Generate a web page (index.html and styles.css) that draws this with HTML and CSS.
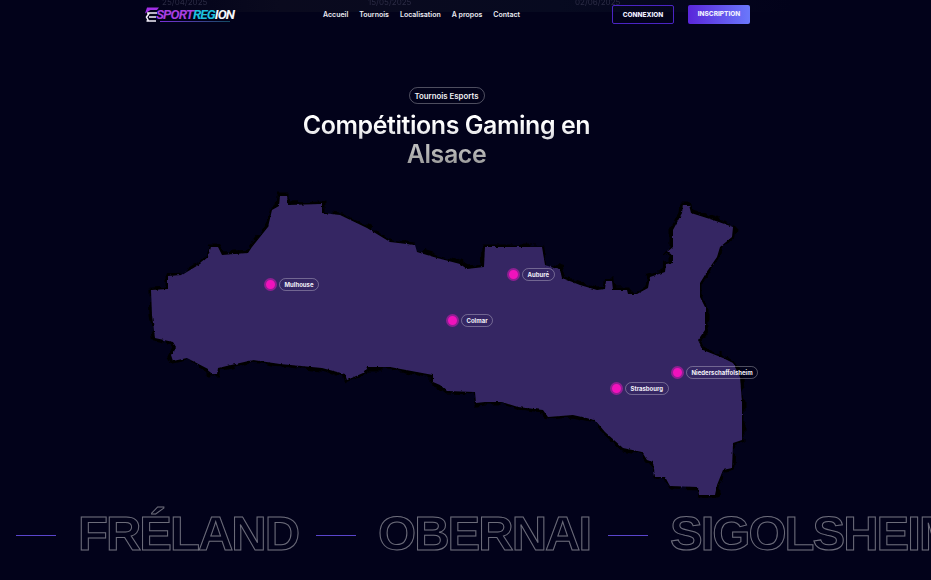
FILE: index.html
```html
<!DOCTYPE html>
<html lang="fr">
<head>
<meta charset="utf-8">
<title>EsportRegion</title>
<link rel="stylesheet" href="styles.css">
</head>
<body>
<div class="page">
  <div class="date-strip">
    <span class="date date-a">25/04/2025</span>
    <span class="date date-b">15/05/2025</span>
    <span class="date date-c">02/06/2025</span>
  </div>
  <header class="header">
    <a class="logo" href="#">
      <svg class="logo-mark" viewBox="0 0 16 16" width="16" height="16" aria-hidden="true">
        <path class="mark-top" d="M3 1.5H15L13 4H6.5L1 7.5Z"/>
        <path class="mark-e" d="M3 7H13M5 11H12M2.5 15H12M5 7.5L2.5 11L4.5 15"/>
      </svg>
      <span class="logo-text"><span class="l-sport">SPORT</span><span class="l-reg">REG</span><span class="l-ion">ION</span></span>
      <span class="logo-line"></span>
    </a>
    <nav class="nav">
      <a href="#">Accueil</a>
      <a href="#">Tournois</a>
      <a href="#">Localisation</a>
      <a href="#">A propos</a>
      <a href="#">Contact</a>
    </nav>
    <div class="actions">
      <a class="btn btn-outline" href="#">CONNEXION</a>
      <a class="btn btn-fill" href="#">INSCRIPTION</a>
    </div>
  </header>

  <section class="hero">
    <span class="badge">Tournois Esports</span>
    <h1 class="title"><span class="title-main">Compétitions Gaming en</span><span class="title-sub">Alsace</span></h1>
  </section>

  <section class="map">
    <svg class="map-svg" viewBox="0 190 931 310" width="931" height="310" aria-hidden="true">
      <defs>
        <filter id="rough-shadow" x="-5%" y="-5%" width="110%" height="110%">
          <feTurbulence type="fractalNoise" baseFrequency="0.09" numOctaves="3" seed="4"/>
          <feDisplacementMap in="SourceGraphic" scale="9" xChannelSelector="R" yChannelSelector="G"/>
        </filter>
        <filter id="rough-fill" x="-5%" y="-5%" width="110%" height="110%">
          <feTurbulence type="fractalNoise" baseFrequency="0.25" numOctaves="2" seed="9"/>
          <feDisplacementMap in="SourceGraphic" scale="2.5" xChannelSelector="R" yChannelSelector="G"/>
        </filter>
        <path id="alsace" d="M151 290L168 289L168 276L182 275L200 264L208 257L211 247L218 247L222 255L248 253L252 247L268 227L272 210L279 206L280 196L287 196L288 205L322 204L322 213L340 215L367 228L390 242L415 245L417 252L437 258L460 264L467 269L484 267L485 247L542 247L545 265L560 270L562 278L580 285L597 290L605 289L606 281L612 281L613 290L627 290L628 294L637 294L648 288L650 277L665 272L666 264L673 263L673 255L667 252L673 247L673 230L682 213L683 205L689 205L691 213L713 220L733 227L732 237L720 247L717 257L708 270L700 283L700 297L705 307L705 330L698 340L703 350L723 358L733 363L740 377L742 403L742 440L733 443L732 468L723 470L717 485L715 495L699 495L698 487L670 486L665 477L655 477L653 462L647 460L642 452L623 448L605 432L595 420L573 415L548 417L543 410L518 407L502 402L485 402L476 403L475 392L447 391L440 385L433 382L433 375L390 367L367 367L363 373L347 380L345 374L322 368L280 364L253 360L218 368L217 374L211 374L210 370L187 358L173 361L171 355L176 347L173 342L155 338L152 315Z"/>
      </defs>
      <use class="region-shadow" href="#alsace"/>
      <use class="region" href="#alsace"/>
    </svg>
    <div class="pin pin-mulhouse"><span class="dot"></span><span class="pin-label">Mulhouse</span></div>
    <div class="pin pin-aubure"><span class="dot"></span><span class="pin-label">Auburé</span></div>
    <div class="pin pin-colmar"><span class="dot"></span><span class="pin-label">Colmar</span></div>
    <div class="pin pin-nieder"><span class="dot"></span><span class="pin-label">Niederschaffolsheim</span></div>
    <div class="pin pin-strasbourg"><span class="dot"></span><span class="pin-label">Strasbourg</span></div>
  </section>

  <section class="marquee">
    <span class="dash"></span><span class="word">FRÉLAND</span>
    <span class="dash"></span><span class="word">OBERNAI</span>
    <span class="dash"></span><span class="word">SIGOLSHEIM</span>
  </section>
</div>
</body>
</html>
```
FILE: styles.css
```css
* { box-sizing: border-box; }
html, body { margin: 0; padding: 0; }
body {
  background: #02021a;
  color: #fff;
  font-family: Inter, "Liberation Sans", sans-serif;
}
a { color: inherit; text-decoration: none; }
.page {
  position: relative;
  width: 931px;
  height: 580px;
  overflow: hidden;
  display: flex;
  flex-direction: column;
}
.date-strip {
  position: absolute;
  top: 0;
  left: 0;
  width: 931px;
  height: 12px;
  background: linear-gradient(90deg, #02021a 15%, #0a0a1e 30%, #070a20 60%, #02021a 85%);
}
.date {
  position: absolute;
  top: -3px;
  font-size: 8px;
  color: #2b2b44;
  filter: blur(.4px);
}
.date-a { left: 162px; }
.date-b { left: 368px; }
.date-c { left: 575px; }
.header {
  position: relative;
  height: 29px;
  width: 606px;
  margin-left: 144px;
  flex: none;
  display: flex;
  align-items: center;
}
.logo {
  position: relative;
  display: flex;
  align-items: center;
  width: 179px;
  height: 29px;
  padding-bottom: 1px;
}
.logo-mark { flex: none; }
.mark-top { fill: #a22fe6; }
.mark-e { fill: none; stroke: #f3f0fa; stroke-width: 1.6; }
.logo-text {
  font-family: Roboto, sans-serif;
  font-style: italic;
  font-weight: 700;
  font-size: 13.5px;
  letter-spacing: -.95px;
  margin-left: -4px;
}
.l-sport { color: #a83fe0; }
.l-reg { color: #1ec0de; }
.l-ion { color: #f4f6fa; }
.logo-line {
  position: absolute;
  left: 16px;
  top: 21px;
  width: 70px;
  height: 1px;
  background: linear-gradient(90deg, #7a30d8, #114a60);
}
.nav {
  display: flex;
  gap: 11px;
  font-size: 7px;
  font-weight: 600;
  color: #ececf2;
  width: 289px;
}
.actions { display: flex; gap: 14px; }
.btn {
  width: 62px;
  height: 19px;
  display: flex;
  align-items: center;
  justify-content: center;
  font-size: 6.5px;
  font-weight: 800;
  border-radius: 2px;
  color: #eef;
}
.btn-outline { border: 1px solid #4a24c4; }
.btn-fill { background: linear-gradient(90deg, #5a26da, #6a78fb); padding-bottom: 2px; }
.hero {
  display: flex;
  flex-direction: column;
  align-items: center;
  padding: 58px 38px 0 0;
  flex: none;
}
.badge {
  height: 17px;
  width: 76px;
  display: flex;
  align-items: center;
  justify-content: center;
  border: 1px solid rgba(255,255,255,.3);
  border-radius: 9px;
  font-size: 7.8px;
  font-weight: 600;
  color: #f0f0f4;
}
.title {
  margin: 7px 0 0;
  font-size: 25px;
  font-weight: 600;
  letter-spacing: -.45px;
  line-height: 29px;
  text-align: center;
}
.title-main, .title-sub {
  display: block;
  background-clip: text;
  -webkit-background-clip: text;
  color: transparent;
}
.title-main { background-image: linear-gradient(180deg, #fff 40%, #d8d8dc); }
.title-sub { background-image: linear-gradient(180deg, #bdbdbd 30%, #8f8f8f); }
.map {
  position: relative;
  margin-top: 21px;
  height: 310px;
  flex: none;
}
.map-svg { display: block; }
.region-shadow {
  fill: #000;
  stroke: #000;
  stroke-width: 5;
  stroke-linejoin: miter;
  filter: url(#rough-shadow);
}
.region {
  fill: #352764;
  filter: url(#rough-fill);
}
.pin {
  position: absolute;
  display: flex;
  align-items: center;
  gap: 2px;
  height: 13px;
}
.pin-mulhouse { left: 264px; top: 88px; }
.pin-aubure { left: 507px; top: 78px; }
.pin-colmar { left: 446px; top: 124px; }
.pin-nieder { left: 671px; top: 176px; }
.pin-strasbourg { left: 610px; top: 192px; }
.dot {
  width: 13px;
  height: 13px;
  flex: none;
  border-radius: 50%;
  background: #f012bc;
  border: 2px solid #8e1f92;
}
.pin-label {
  height: 13px;
  display: flex;
  align-items: center;
  padding: 0 4.5px;
  border: 1px solid rgba(255,255,255,.3);
  border-radius: 7px;
  font-size: 6px;
  font-weight: 700;
  color: #f2f0f8;
  white-space: nowrap;
}
.marquee {
  display: flex;
  align-items: center;
  height: 70px;
  padding-left: 16px;
  flex: none;
  white-space: nowrap;
}
.dash {
  width: 40px;
  height: 1px;
  flex: none;
  background: #5a45cc;
}
.word {
  flex: none;
  margin: 0 18px 4px 22px;
  font-family: "Liberation Sans", sans-serif;
  font-size: 49px;
  font-weight: 700;
  letter-spacing: -2px;
  color: transparent;
  -webkit-text-stroke: 1px rgba(255,255,255,.42);
}
```
